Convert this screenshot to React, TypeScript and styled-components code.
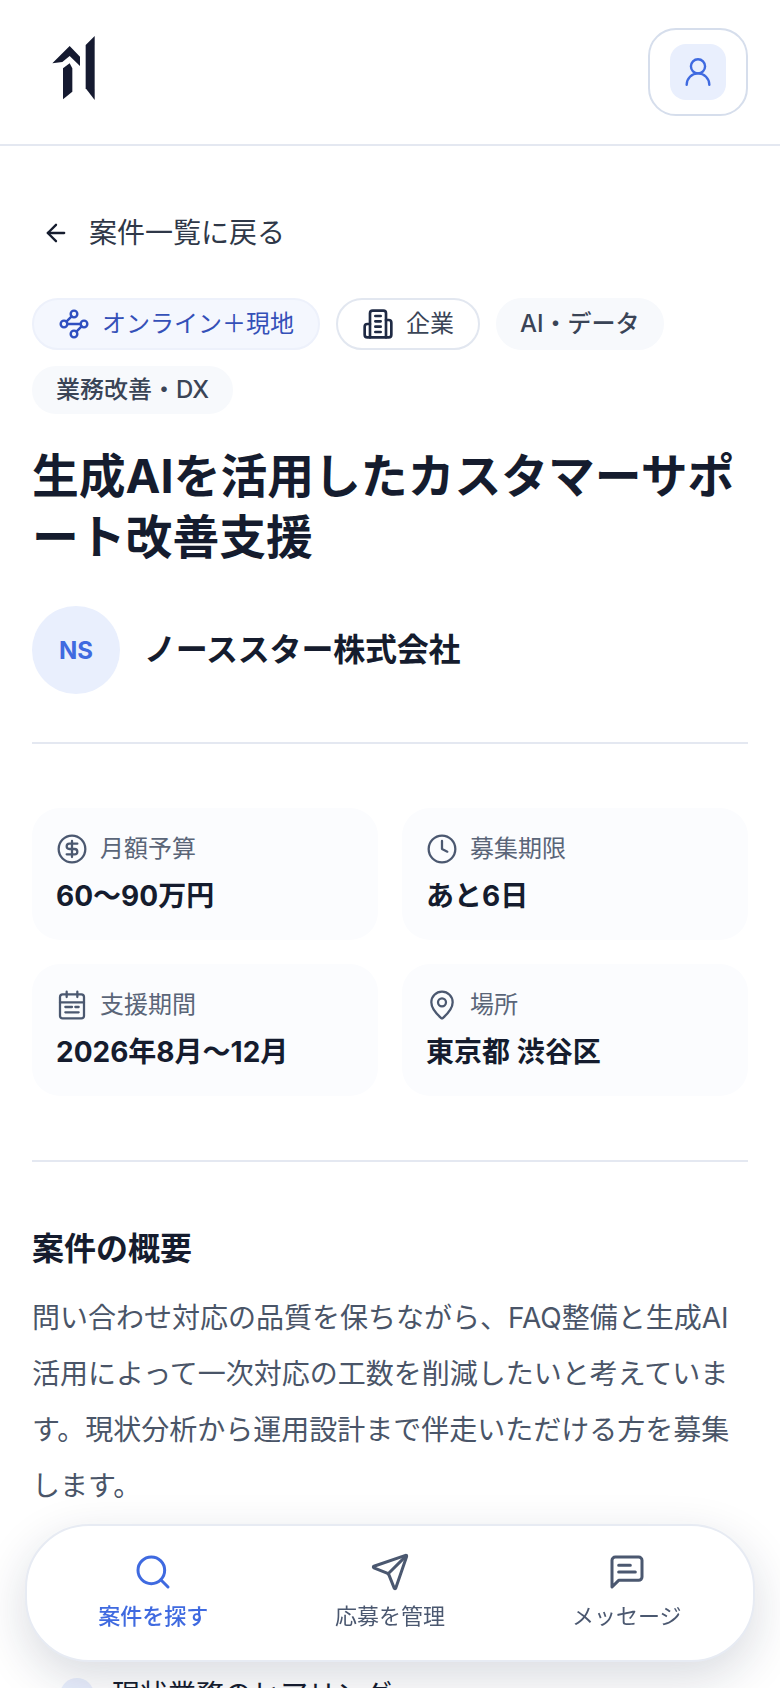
import React from "react";
import styled, { createGlobalStyle } from "styled-components";
import { CircleDollarSign, Clock, MapPin, Search, Send, UserRound, Waypoints, ArrowLeft } from "lucide-react";

const Global = createGlobalStyle`
  html, body { margin: 0; padding: 0; background: #fff; }
  body { font-family: Inter, "Noto Sans CJK JP", sans-serif; color: #151c2e; -webkit-font-smoothing: antialiased; }
  #root { height: 1688px; overflow: hidden; }
`;

const Header = styled.header`
  height: 144px; display: flex; align-items: center; justify-content: space-between;
  padding: 0 32px 0 44px; background: #fff; border-bottom: 2px solid #e4e8f1;
`;
const Logo = styled.svg` width: 60px; height: 80px; margin-top: -4px; display: block; `;
const AccountButton = styled.button`
  width: 100px; height: 88px; border: 2px solid #d6deec; border-radius: 28px; background: #fff;
  display: flex; align-items: center; justify-content: center; padding: 0;
`;
const AccountIcon = styled.span`
  width: 56px; height: 56px; border-radius: 16px; background: #e9effd; color: #3f6ae0;
  display: flex; align-items: center; justify-content: center;
`;
const Main = styled.main` padding: 66px 32px 0; `;
const BackLink = styled.a`
  display: flex; align-items: center; gap: 19px; font-size: 28px; line-height: 42px; color: #2f3848;
  margin-left: 10px;
  svg { color: #151c2e; }
`;
const Tags = styled.div` display: flex; flex-wrap: wrap; gap: 16px; margin-top: 44px; `;
const Tag = styled.span<{ $kind: "accent" | "outline" | "plain" }>`
  display: inline-flex; align-items: center; gap: 12px; box-sizing: border-box;
  font-size: 24px; line-height: 32px; font-weight: ${p => p.$kind === "plain" ? 500 : 400};
  padding: ${p => p.$kind === "plain" ? "6px 22px" : "8px 24px"}; border-radius: 26px;
  border: 2px solid ${p => p.$kind === "accent" ? "#edf1fb" : p.$kind === "outline" ? "#e2e7f0" : "#f7f9fc"};
  background: ${p => p.$kind === "accent" ? "#f4f7fe" : p.$kind === "outline" ? "#fff" : "#f7f9fc"};
  color: ${p => p.$kind === "accent" ? "#3450b8" : "#3a4456"};
  svg { color: ${p => p.$kind === "accent" ? "#2f4fc0" : "#1f2a44"}; }
`;
const Title = styled.h1` margin: 32px 0 0; font-size: 46.8px; line-height: 61px; font-weight: 700; color: #151c2e; `;
const Company = styled.div` display: flex; align-items: center; gap: 24px; margin-top: 38px; `;
const Avatar = styled.div`
  width: 88px; height: 88px; border-radius: 50%; background: #e9effd; color: #3f6ae0;
  display: flex; align-items: center; justify-content: center; font-size: 24px; font-weight: 700;
`;
const CompanyName = styled.div` font-size: 32px; line-height: 48px; font-weight: 700; letter-spacing: -0.2px; color: #151c2e; `;
const Divider = styled.hr<{ $top: number }>` border: 0; height: 2px; background: #e4e8f1; margin: ${p => p.$top}px 0 0; `;
const Facts = styled.div` display: grid; grid-template-columns: 1fr 1fr; gap: 24px; margin-top: 64px; `;
const Fact = styled.div` height: 132px; box-sizing: border-box; padding: 25px 24px 0; border-radius: 28px; background: #fbfcfe; `;
const FactLabel = styled.div`
  display: flex; align-items: center; gap: 12px; font-size: 24px; line-height: 32px; color: #5a6578;
  svg { color: #4b5870; }
`;
const FactValue = styled.div` margin-top: 10px; font-size: 28px; line-height: 42px; font-weight: 700; color: #151c2e; `;
const SectionTitle = styled.h2` margin: 63px 0 0; font-size: 32px; line-height: 48px; font-weight: 700; color: #151c2e; `;
const Body = styled.p` margin: 17px 0 0; font-size: 28px; line-height: 56px; color: #4a5568; `;
const List = styled.ul` list-style: none; margin: 160px 0 0; padding: 0; `;
const ListItem = styled.li` display: flex; gap: 18px; font-size: 28px; line-height: 42px; color: #151c2e; `;
const Bullet = styled.span` width: 34px; height: 34px; margin: 4px 0 0 28px; border-radius: 50%; background: #e9effd; flex: none; `;
const BottomNav = styled.nav`
  position: fixed; left: 25px; right: 25px; bottom: 26px; height: 138px; box-sizing: border-box;
  display: grid; grid-template-columns: repeat(3, 1fr); padding: 0 8px;
  background: #fff; border: 2px solid #e7ebf3; border-radius: 64px;
  box-shadow: 0 16px 48px rgba(20, 30, 60, 0.16);
`;
const NavItem = styled.a<{ $active?: boolean }>`
  display: flex; flex-direction: column; align-items: center; padding-top: 26px;
  font-size: 22px; line-height: 33px; gap: 8px;
  font-weight: ${p => p.$active ? 500 : 400};
  color: ${p => p.$active ? "#3f6ae0" : "#4b5870"};
`;

function BuildingIcon() {
  return (
    <svg width="32" height="32" viewBox="0 0 24 24" fill="none" stroke="currentColor" strokeWidth="2" strokeLinecap="round" strokeLinejoin="round">
      <path d="M6 22V4a2 2 0 0 1 2-2h8a2 2 0 0 1 2 2v18Z" />
      <path d="M6 12H4a2 2 0 0 0-2 2v6a2 2 0 0 0 2 2h2" />
      <path d="M18 9h2a2 2 0 0 1 2 2v9a2 2 0 0 1-2 2h-2" />
      <path d="M10 6h4M10 10h4M10 14h4M10 18h4" />
    </svg>
  );
}
function CalendarIcon() {
  return (
    <svg width="32" height="32" viewBox="0 0 24 24" fill="none" stroke="currentColor" strokeWidth="1.7" strokeLinecap="round" strokeLinejoin="round">
      <rect x="3" y="4" width="18" height="18" rx="2" />
      <path d="M8 2v4M16 2v4M3 10h18" />
      <path d="M7 13.5h5M14.5 13.5h2.5M7 17.5h10" />
    </svg>
  );
}
function MessageIcon() {
  return (
    <svg width="40" height="40" viewBox="0 0 24 24" fill="none" stroke="currentColor" strokeWidth="1.8" strokeLinecap="round" strokeLinejoin="round">
      <path d="M21 15a2 2 0 0 1-2 2H7l-4 4V5a2 2 0 0 1 2-2h14a2 2 0 0 1 2 2z" />
      <path d="M7 8h7M7 12h10" />
    </svg>
  );
}

const facts = [
  { icon: <CircleDollarSign size={32} strokeWidth={1.7} />, label: "月額予算", value: "60〜90万円" },
  { icon: <Clock size={32} strokeWidth={1.7} />, label: "募集期限", value: "あと6日" },
  { icon: <CalendarIcon />, label: "支援期間", value: "2026年8月〜12月" },
  { icon: <MapPin size={32} strokeWidth={1.7} />, label: "場所", value: "東京都 渋谷区" },
];

export default function App() {
  return (
    <>
      <Global />
      <Header>
        <Logo viewBox="0 0 180 240" aria-label="ロゴ">
          <path fill="#151a30" d="M77 48L25 100L55 96L77 78L108 108V80Z" />
          <path fill="#151a30" d="M57 115L77 100L85 115V185L57 208Z" />
          <path fill="#151a30" d="M152 18L125 45V175L152 210Z" />
        </Logo>
        <AccountButton aria-label="アカウント">
          <AccountIcon><UserRound size={34} strokeWidth={1.7} /></AccountIcon>
        </AccountButton>
      </Header>
      <Main>
        <BackLink><ArrowLeft size={28} />案件一覧に戻る</BackLink>
        <Tags>
          <Tag $kind="accent"><Waypoints size={32} strokeWidth={1.8} />オンライン＋現地</Tag>
          <Tag $kind="outline"><BuildingIcon />企業</Tag>
          <Tag $kind="plain">AI・データ</Tag>
          <Tag $kind="plain">業務改善・DX</Tag>
        </Tags>
        <Title>生成AIを活用したカスタマーサポート改善支援</Title>
        <Company>
          <Avatar>NS</Avatar>
          <CompanyName>ノーススター株式会社</CompanyName>
        </Company>
        <Divider $top={48} />
        <Facts>
          {facts.map(f => (
            <Fact key={f.label}>
              <FactLabel>{f.icon}{f.label}</FactLabel>
              <FactValue>{f.value}</FactValue>
            </Fact>
          ))}
        </Facts>
        <Divider $top={64} />
        <SectionTitle>案件の概要</SectionTitle>
        <Body>問い合わせ対応の品質を保ちながら、FAQ整備と生成AI活用によって一次対応の工数を削減したいと考えています。現状分析から運用設計まで伴走いただける方を募集します。</Body>
        <List>
          <ListItem><Bullet />現状業務のヒアリング</ListItem>
        </List>
      </Main>
      <BottomNav>
        <NavItem $active><Search size={40} strokeWidth={1.8} />案件を探す</NavItem>
        <NavItem><Send size={40} strokeWidth={1.8} />応募を管理</NavItem>
        <NavItem><MessageIcon />メッセージ</NavItem>
      </BottomNav>
    </>
  );
}
